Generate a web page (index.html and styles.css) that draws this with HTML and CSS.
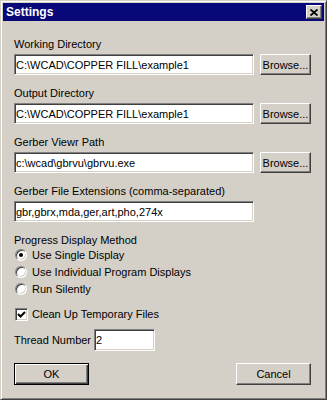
FILE: index.html
```html
<!DOCTYPE html>
<html lang="en">
<head>
    <meta charset="UTF-8">
    <title>Settings</title>
    <link rel="stylesheet" href="styles.css">
</head>
<body>

    <div class="window">
        <div class="titlebar">
            <span class="title">Settings</span>
            <span class="close">
                <svg width="8" height="7" viewBox="0 0 8 7">
                    <path d="M0.5 0.5 L7.5 6.5 M7.5 0.5 L0.5 6.5" stroke="#000" stroke-width="1.8" fill="none"/>
                </svg>
            </span>
        </div>

        <div class="content">
            <div class="field">
                <div class="label">Working Directory</div>
                <div class="row">
                    <input type="text" class="text wide" value="C:\WCAD\COPPER FILL\example1">
                    <button class="button browse">Browse...</button>
                </div>
            </div>

            <div class="field">
                <div class="label">Output Directory</div>
                <div class="row">
                    <input type="text" class="text wide" value="C:\WCAD\COPPER FILL\example1">
                    <button class="button browse">Browse...</button>
                </div>
            </div>

            <div class="field">
                <div class="label">Gerber Viewr Path</div>
                <div class="row">
                    <input type="text" class="text wide" value="c:\wcad\gbrvu\gbrvu.exe">
                    <button class="button browse">Browse...</button>
                </div>
            </div>

            <div class="field">
                <div class="label">Gerber File Extensions (comma-separated)</div>
                <div class="row">
                    <input type="text" class="text wide" value="gbr,gbrx,mda,ger,art,pho,274x">
                </div>
            </div>

            <div class="group">
                <div class="label">Progress Display Method</div>
                <div class="option"><span class="radio checked"></span>Use Single Display</div>
                <div class="option"><span class="radio"></span>Use Individual Program Displays</div>
                <div class="option"><span class="radio"></span>Run Silently</div>
            </div>

            <div class="option check-row">
                <span class="checkbox">
                    <svg width="9" height="9" viewBox="0 0 9 9">
                        <path d="M1 4 L3.5 6.5 L8 2" stroke="#000" stroke-width="2" fill="none"/>
                    </svg>
                </span>
                Clean Up Temporary Files
            </div>

            <div class="thread">
                <span>Thread Number</span>
                <input type="text" class="text small" value="2">
            </div>

            <div class="actions">
                <button class="button default">OK</button>
                <button class="button">Cancel</button>
            </div>
        </div>
    </div>

</body>
</html>
```

FILE: styles.css
```css
body {
    margin: 0;
    font-family: "Liberation Sans", Arial, sans-serif;
    font-size: 11px;
    color: #000;
}
.window {
    width: 327px;
    height: 400px;
    box-sizing: border-box;
    background: #d4d0c8;
    border: 1px solid;
    border-color: #d4d0c8 #404040 #404040 #d4d0c8;
    box-shadow: inset 1px 1px #fff, inset -1px -1px #808080;
    padding: 2px;
}
.titlebar {
    height: 18px;
    background: #080878;
    display: flex;
    align-items: center;
    justify-content: space-between;
    padding: 0 2px 0 3px;
}
.title {
    color: #fff;
    font-weight: bold;
    font-size: 12px;
}
.close {
    width: 16px;
    height: 14px;
    box-sizing: border-box;
    background: #d4d0c8;
    border: 1px solid;
    border-color: #fff #404040 #404040 #fff;
    box-shadow: inset -1px -1px #808080;
    display: flex;
    align-items: center;
    justify-content: center;
}
.content {
    padding: 17px 13px 0 11px;
}
.label {
    line-height: 13px;
    height: 13px;
}
.field {
    margin-bottom: 12px;
}
.field .label {
    margin-bottom: 3px;
}
.row {
    display: flex;
    align-items: center;
    gap: 6px;
}
.text {
    height: 21px;
    box-sizing: border-box;
    margin: 0;
    padding: 0 1px;
    border: 1px solid;
    border-color: #808080 #fff #fff #808080;
    box-shadow: inset 1px 1px #404040, inset -1px -1px #d4d0c8;
    background: #fff;
    font: inherit;
    color: #000;
    outline: none;
}
.wide {
    width: 240px;
}
.small {
    width: 61px;
    height: 22px;
}
.button {
    height: 22px;
    width: 75px;
    box-sizing: border-box;
    margin: 0;
    padding: 0;
    background: #d4d0c8;
    border: 1px solid;
    border-color: #fff #404040 #404040 #fff;
    box-shadow: inset -1px -1px #808080;
    font: inherit;
    color: #000;
}
.browse {
    width: 51px;
    height: 21px;
}
.default {
    border: 1px solid #000;
    box-shadow: inset 1px 1px #fff, inset -1px -1px #404040, inset -2px -2px #808080;
}
.option {
    display: flex;
    align-items: center;
    height: 16px;
}
.group .option + .option {
    height: 17px;
}
.radio {
    width: 12px;
    height: 12px;
    box-sizing: border-box;
    margin: 0 5px 0 1px;
    border-radius: 50%;
    background: #fff;
    border: 1px solid;
    border-color: #808080 #fff #fff #808080;
    box-shadow: inset 1px 1px #404040, inset -1px -1px #d4d0c8;
    display: flex;
    align-items: center;
    justify-content: center;
}
.radio.checked::after {
    content: "";
    width: 4px;
    height: 4px;
    border-radius: 50%;
    background: #000;
}
.check-row {
    margin-top: 9px;
}
.checkbox {
    width: 13px;
    height: 13px;
    box-sizing: border-box;
    margin: 0 4px 0 1px;
    background: #fff;
    border: 1px solid;
    border-color: #808080 #fff #fff #808080;
    box-shadow: inset 1px 1px #404040, inset -1px -1px #d4d0c8;
    display: flex;
    align-items: center;
    justify-content: center;
}
.thread {
    display: flex;
    align-items: center;
    gap: 3px;
    margin-top: 7px;
}
.actions {
    display: flex;
    justify-content: space-between;
    margin-top: 12px;
}
```
